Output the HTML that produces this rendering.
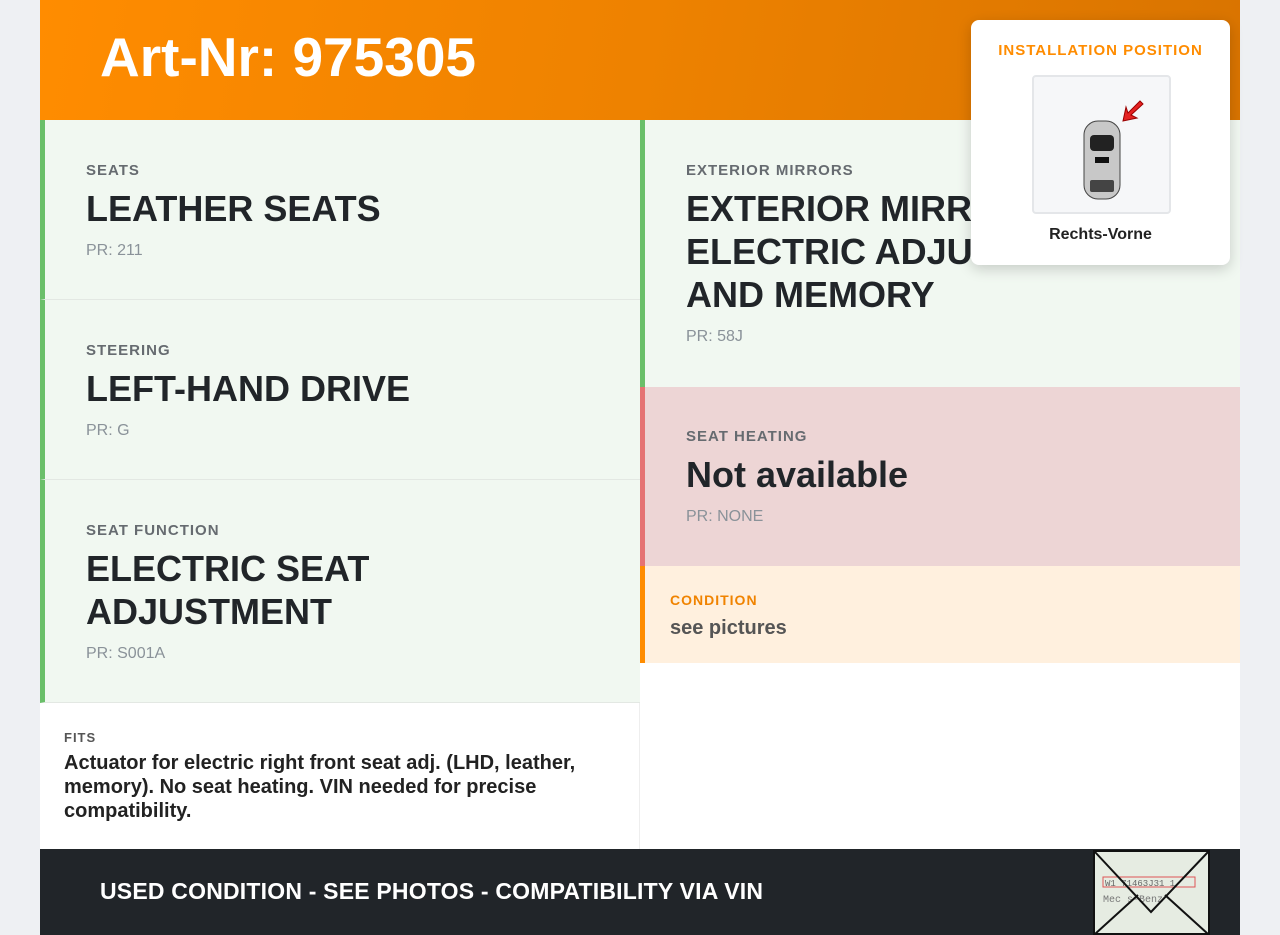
<!DOCTYPE html>
<html><head><meta charset="utf-8"><style>
*{box-sizing:border-box;margin:0;padding:0}
body{width:1280px;height:935px;background:#eef0f3;font-family:"Liberation Sans",sans-serif;position:relative;overflow:hidden}
.page{position:absolute;left:40px;top:0;width:1200px;height:935px;background:#fff}
.hdr{position:absolute;left:0;top:0;width:1200px;height:120px;background:linear-gradient(100deg,#ff8c00 0%,#ee8200 50%,#d97400 100%)}
.hdr h1{position:absolute;left:60px;top:25px;color:#fff;font-size:55px;font-weight:bold}
.cell{position:absolute;background:#f1f8f1;border-left:5px solid #6abf69;padding-left:41px}
.lbl{font-size:15px;font-weight:bold;color:#666b70;letter-spacing:1px}
.t{font-size:36px;font-weight:bold;color:#212529;line-height:43px;margin-top:8px}
.pr{font-size:16px;color:#8a9299;margin-top:12px}
.ln{border-bottom:1px solid #e3e8e3}
.ftr{position:absolute;left:0;top:849px;width:1200px;height:86px;background:#212529;color:#fff;font-size:23px;font-weight:bold;padding:29px 0 0 60px;letter-spacing:.2px}
.pop{position:absolute;left:971px;top:20px;width:259px;height:245px;background:#fff;border-radius:8px;box-shadow:0 4px 14px rgba(0,0,0,.18);text-align:center}
</style></head><body>
<div class="page">
<div class="hdr"><h1>Art-Nr: 975305</h1></div>
<div class="cell ln" style="left:0;top:120px;width:600px;height:180px;padding-top:42px"><div class="lbl">SEATS</div><div class="t">LEATHER SEATS</div><div class="pr">PR: 211</div></div>
<div class="cell ln" style="left:0;top:300px;width:600px;height:180px;padding-top:42px"><div class="lbl">STEERING</div><div class="t">LEFT-HAND DRIVE</div><div class="pr">PR: G</div></div>
<div class="cell ln" style="left:0;top:480px;width:600px;height:223px;padding-top:42px"><div class="lbl">SEAT FUNCTION</div><div class="t">ELECTRIC SEAT<br>ADJUSTMENT</div><div class="pr">PR: S001A</div></div>
<div style="position:absolute;left:0;top:703px;width:600px;height:146px;border-right:1px solid #eee;padding:27px 24px">
<div style="font-size:13px;font-weight:bold;color:#555;letter-spacing:1px">FITS</div>
<div style="font-size:20px;font-weight:bold;color:#222;line-height:24px;margin-top:6px">Actuator for electric right front seat adj. (LHD, leather, memory). No seat heating. VIN needed for precise compatibility.</div></div>
<div class="cell" style="left:600px;top:120px;width:600px;height:267px;padding-top:42px"><div class="lbl">EXTERIOR MIRRORS</div><div class="t">EXTERIOR MIRRORS<br>ELECTRIC ADJUSTABLE<br>AND MEMORY</div><div class="pr">PR: 58J</div></div>
<div class="cell" style="left:600px;top:387px;width:600px;height:179px;padding-top:41px;background:#edd5d5;border-left-color:#e57373"><div class="lbl">SEAT HEATING</div><div class="t">Not available</div><div class="pr">PR: NONE</div></div>
<div style="position:absolute;left:600px;top:566px;width:600px;height:97px;background:#fff0de;border-left:5px solid #ff8c00;padding:26px 25px">
<div style="font-size:14px;font-weight:bold;color:#f08300;letter-spacing:1px">CONDITION</div>
<div style="font-size:20px;font-weight:bold;color:#555;margin-top:9px">see pictures</div></div>
<div class="ftr">USED CONDITION - SEE PHOTOS - COMPATIBILITY VIA VIN</div>
<svg style="position:absolute;left:1053px;top:850px" width="117" height="85" viewBox="0 0 117 85">
<rect x="1" y="1" width="115" height="83" fill="#e6ece2" stroke="#111" stroke-width="2"/>
<rect x="10" y="27" width="92" height="10" fill="none" stroke="#d55" stroke-width="1"/>
<text x="12" y="36" font-size="9" fill="#666" font-family="Liberation Mono">W1 71463J31 1</text>
<text x="10" y="52" font-size="10" fill="#777" font-family="Liberation Mono">Mec  s-Benz</text>
<path d="M2 2 L58 62 L115 2 M2 84 L45 45 M115 84 L72 45" stroke="#111" stroke-width="2" fill="none"/>
</svg>
</div>
<div class="pop">
<div style="font-size:15px;font-weight:bold;color:#ff8c00;letter-spacing:1px;margin-top:22px">INSTALLATION POSITION</div>
<div style="position:absolute;left:61px;top:55px;width:139px;height:139px;background:#f6f7f9;border:2px solid #e4e6e9;border-radius:4px">
<svg width="135" height="135" viewBox="0 0 135 135">
<rect x="50" y="44" width="36" height="78" rx="14" fill="#c8c8c8" stroke="#444"/>
<rect x="56" y="58" width="24" height="16" rx="4" fill="#222"/>
<rect x="61" y="80" width="14" height="6" fill="#111"/>
<rect x="56" y="103" width="24" height="12" rx="2" fill="#444"/>
<path d="M106 24 L94 36 L92 30 L89 44 L103 41 L97 38 L109 27Z" fill="#e52222" stroke="#900"/>
</svg></div>
<div style="position:absolute;left:0;width:100%;top:206px;font-size:16px;font-weight:bold;color:#222">Rechts-Vorne</div>
</div>
</body></html>
